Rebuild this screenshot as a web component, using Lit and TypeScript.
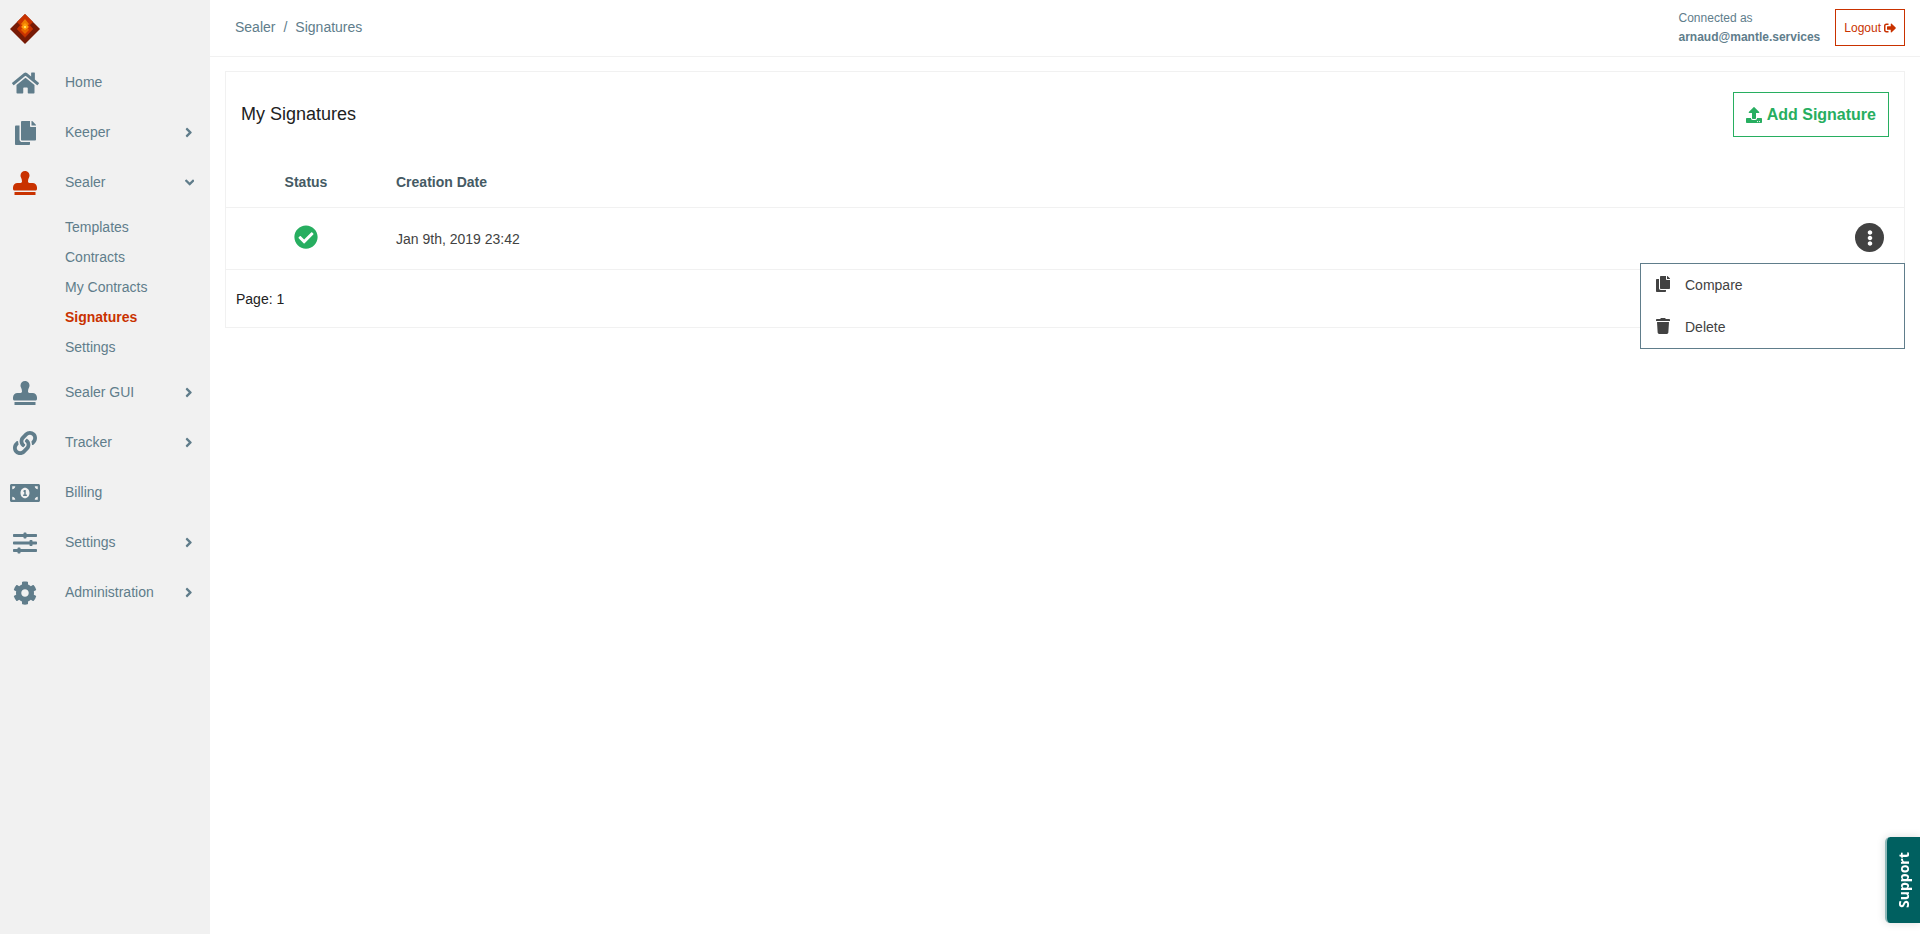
import { LitElement, html, css, nothing } from "lit";
import { customElement, property, state } from "lit/decorators.js";
import { classMap } from "lit/directives/class-map.js";

type Glyph = { w: number; d: string };

const GLYPHS: Record<string, Glyph> = {
  home: { w: 576, d: "M280.37 148.26L96 300.11V464a16 16 0 0 0 16 16l112.06-.29a16 16 0 0 0 15.92-16V368a16 16 0 0 1 16-16h64a16 16 0 0 1 16 16v95.64a16 16 0 0 0 16 16.05L464 480a16 16 0 0 0 16-16V300L295.67 148.26a12.19 12.19 0 0 0-15.3 0zM571.6 251.47L488 182.56V44.05a12 12 0 0 0-12-12h-56a12 12 0 0 0-12 12v72.61L318.47 43a48 48 0 0 0-61 0L4.34 251.47a12 12 0 0 0-1.6 16.9l25.5 31A12 12 0 0 0 45.15 301l235.22-193.74a12.19 12.19 0 0 1 15.3 0L530.9 301a12 12 0 0 0 16.9-1.6l25.5-31a12 12 0 0 0-1.7-16.93z" },
  copy: { w: 448, d: "M320 448v40c0 13.255-10.745 24-24 24H24c-13.255 0-24-10.745-24-24V120c0-13.255 10.745-24 24-24h72v296c0 30.879 25.121 56 56 56h168zm0-344V0H152c-13.255 0-24 10.745-24 24v368c0 13.255 10.745 24 24 24h272c13.255 0 24-10.745 24-24V128H344c-13.2 0-24-10.8-24-24zm120.971-31.029L375.029 7.029A24 24 0 0 0 358.059 0H352v96h96v-6.059a24 24 0 0 0-7.029-16.97z" },
  stamp: { w: 512, d: "M32 512h448v-64H32v64zm384-256h-66.56c-16.26 0-29.44-13.18-29.44-29.44v-9.46c0-27.37 8.88-53.41 21.46-77.72 9.11-17.61 12.9-38.39 9.05-60.42-6.77-38.78-38.47-70.7-77.26-77.45C212.62-9.04 160 37.33 160 96c0 14.16 3.12 27.54 8.69 39.58C182.02 164.43 192 194.7 192 226.49v.07c0 16.26-13.18 29.44-29.44 29.44H96c-53.02 0-96 42.98-96 96v32c0 17.67 14.33 32 32 32h448c17.67 0 32-14.33 32-32v-32c0-53.02-42.98-96-96-96z" },
  link: { w: 512, d: "M326.612 185.391c59.747 59.809 58.927 155.698.36 214.59-.11.12-.24.25-.36.37l-67.2 67.2c-59.27 59.27-155.699 59.262-214.96 0-59.27-59.26-59.27-155.7 0-214.96l37.106-37.106c9.84-9.84 26.786-3.3 27.294 10.606.648 17.722 3.826 35.527 9.69 52.721 1.986 5.822.567 12.262-3.783 16.612l-13.087 13.087c-28.026 28.026-28.905 73.66-1.155 101.96 28.024 28.579 74.086 28.749 102.325.51l67.2-67.19c28.191-28.191 28.073-73.757 0-101.83-3.701-3.694-7.429-6.564-10.341-8.569a16.037 16.037 0 0 1-6.947-12.606c-.396-10.567 3.348-21.456 11.698-29.806l21.054-21.055c5.521-5.521 14.182-6.199 20.584-1.731a152.482 152.482 0 0 1 20.522 17.197zM467.547 44.449c-59.261-59.262-155.69-59.27-214.96 0l-67.2 67.2c-.12.12-.25.25-.36.37-58.566 58.892-59.387 154.781.36 214.59a152.454 152.454 0 0 0 20.521 17.196c6.402 4.468 15.064 3.789 20.584-1.731l21.054-21.055c8.35-8.35 12.094-19.239 11.698-29.806a16.037 16.037 0 0 0-6.947-12.606c-2.912-2.005-6.64-4.875-10.341-8.569-28.073-28.073-28.191-73.639 0-101.83l67.2-67.19c28.239-28.239 74.3-28.069 102.325.51 27.75 28.3 26.872 73.934-1.155 101.96l-13.087 13.087c-4.35 4.35-5.769 10.79-3.783 16.612 5.864 17.194 9.042 34.999 9.69 52.721.509 13.906 17.454 20.446 27.294 10.606l37.106-37.106c59.271-59.259 59.271-155.699.001-214.959z" },
  bill: { w: 640, d: "M352 288h-16v-88c0-4.42-3.58-8-8-8h-13.58c-4.74 0-9.37 1.4-13.31 4.03l-15.33 10.22a7.994 7.994 0 0 0-2.22 11.09l8.88 13.31a7.994 7.994 0 0 0 11.09 2.22l.47-.31V288h-16c-4.42 0-8 3.58-8 8v16c0 4.42 3.58 8 8 8h64c4.42 0 8-3.58 8-8v-16c0-4.42-3.58-8-8-8zM608 64H32C14.33 64 0 78.33 0 96v320c0 17.67 14.33 32 32 32h576c17.67 0 32-14.33 32-32V96c0-17.67-14.33-32-32-32zM48 400v-64c35.35 0 64 28.65 64 64H48zm0-224v-64h64c0 35.35-28.65 64-64 64zm272 192c-53.02 0-96-50.15-96-112 0-61.86 42.98-112 96-112s96 50.14 96 112c0 61.87-43 112-96 112zm272 32h-64c0-35.35 28.65-64 64-64v64zm0-224c-35.35 0-64-28.65-64-64h64v64z" },
  sliders: { w: 512, d: "M496 384H160v-16c0-8.8-7.2-16-16-16h-32c-8.8 0-16 7.2-16 16v16H16c-8.8 0-16 7.2-16 16v32c0 8.8 7.2 16 16 16h80v16c0 8.8 7.2 16 16 16h32c8.8 0 16-7.2 16-16v-16h336c8.8 0 16-7.2 16-16v-32c0-8.8-7.2-16-16-16zm0-160h-80v-16c0-8.8-7.2-16-16-16h-32c-8.8 0-16 7.2-16 16v16H16c-8.8 0-16 7.2-16 16v32c0 8.8 7.2 16 16 16h336v16c0 8.8 7.2 16 16 16h32c8.8 0 16-7.2 16-16v-16h80c8.8 0 16-7.2 16-16v-32c0-8.8-7.2-16-16-16zm0-160H288V48c0-8.8-7.2-16-16-16h-32c-8.8 0-16 7.2-16 16v16H16C7.2 64 0 71.2 0 80v32c0 8.8 7.2 16 16 16h208v16c0 8.8 7.2 16 16 16h32c8.8 0 16-7.2 16-16v-16h208c8.8 0 16-7.2 16-16V80c0-8.8-7.2-16-16-16z" },
  cog: { w: 512, d: "M487.4 315.7l-42.6-24.6c4.3-23.2 4.3-47 0-70.2l42.6-24.6c4.9-2.8 7.1-8.6 5.5-14-11.1-35.6-30-67.8-54.7-94.6-3.8-4.1-10-5.1-14.8-2.3L380.8 110c-17.9-15.4-38.5-27.3-60.8-35.1V25.8c0-5.6-3.9-10.5-9.4-11.7-36.7-8.2-74.3-7.8-109.2 0-5.5 1.2-9.4 6.1-9.4 11.7V75c-22.2 7.9-42.8 19.8-60.8 35.1L88.7 85.5c-4.9-2.8-11-1.9-14.8 2.3-24.7 26.7-43.6 58.9-54.7 94.6-1.7 5.4.6 11.2 5.5 14L67.3 221c-4.3 23.2-4.3 47 0 70.2l-42.6 24.6c-4.9 2.8-7.1 8.6-5.5 14 11.1 35.6 30 67.8 54.7 94.6 3.8 4.1 10 5.1 14.8 2.3l42.6-24.6c17.9 15.4 38.5 27.3 60.8 35.1v49.2c0 5.6 3.9 10.5 9.4 11.7 36.7 8.2 74.3 7.8 109.2 0 5.5-1.2 9.4-6.1 9.4-11.7v-49.2c22.2-7.9 42.8-19.8 60.8-35.1l42.6 24.6c4.9 2.8 11 1.9 14.8-2.3 24.7-26.7 43.6-58.9 54.7-94.6 1.5-5.5-.7-11.3-5.6-14.1zM256 336c-44.1 0-80-35.9-80-80s35.9-80 80-80 80 35.9 80 80-35.9 80-80 80z" },
  upload: { w: 512, d: "M296 384h-80c-13.3 0-24-10.7-24-24V192h-87.7c-17.8 0-26.7-21.5-14.1-34.1L242.3 5.7c7.5-7.5 19.8-7.5 27.3 0l152.2 152.2c12.6 12.6 3.7 34.1-14.1 34.1H320v168c0 13.3-10.7 24-24 24zm216-8v112c0 13.3-10.7 24-24 24H24c-13.3 0-24-10.7-24-24V376c0-13.3 10.7-24 24-24h136v8c0 30.9 25.1 56 56 56h80c30.9 0 56-25.1 56-56v-8h136c13.3 0 24 10.7 24 24zm-124 88c0-11-9-20-20-20s-20 9-20 20 9 20 20 20 20-9 20-20zm64 0c0-11-9-20-20-20s-20 9-20 20 9 20 20 20 20-9 20-20z" },
  logout: { w: 512, d: "M497 273L329 441c-15 15-41 4.5-41-17v-96H152c-13.3 0-24-10.7-24-24v-96c0-13.3 10.7-24 24-24h136V88c0-21.4 25.9-32 41-17l168 168c9.3 9.4 9.3 24.6 0 34zM192 436v-40c0-6.6-5.4-12-12-12H96c-17.7 0-32-14.3-32-32V160c0-17.7 14.3-32 32-32h84c6.6 0 12-5.4 12-12V76c0-6.6-5.4-12-12-12H96c-53 0-96 43-96 96v192c0 53 43 96 96 96h84c6.6 0 12-5.4 12-12z" },
  trash: { w: 448, d: "M0 84V56c0-13.3 10.7-24 24-24h112l9.4-18.7c4-8.2 12.3-13.3 21.4-13.3h114.3c9.1 0 17.4 5.1 21.5 13.3L312 32h112c13.3 0 24 10.7 24 24v28c0 6.6-5.4 12-12 12H12C5.4 96 0 90.6 0 84zm415.2 56.7L394.8 467c-1.6 25.3-22.6 45-47.9 45H101.1c-25.3 0-46.3-19.7-47.9-45L32.8 140.7c-.4-6.9 5.1-12.7 12-12.7h358.5c6.8 0 12.3 5.8 11.9 12.7z" },
  check: { w: 512, d: "M504 256c0 136.967-111.033 248-248 248S8 392.967 8 256 119.033 8 256 8s248 111.033 248 248zM227.314 387.314l184-184c6.248-6.248 6.248-16.379 0-22.627l-22.627-22.627c-6.248-6.249-16.379-6.249-22.628 0L216 308.118l-70.059-70.059c-6.248-6.248-16.379-6.248-22.628 0l-22.627 22.627c-6.248 6.248-6.248 16.379 0 22.627l104 104c6.249 6.249 16.379 6.249 22.628.001z" },
  dots: { w: 192, d: "M96 184c39.8 0 72 32.2 72 72s-32.2 72-72 72-72-32.2-72-72 32.2-72 72-72zM24 80c0 39.8 32.2 72 72 72s72-32.2 72-72S135.8 8 96 8 24 40.2 24 80zm0 352c0 39.8 32.2 72 72 72s72-32.2 72-72-32.2-72-72-72-72 32.2-72 72z" },
  right: { w: 256, d: "M224.3 273l-136 136c-9.4 9.4-24.6 9.4-33.9 0l-22.6-22.6c-9.4-9.4-9.4-24.6 0-33.9l96.4-96.4-96.4-96.4c-9.4-9.4-9.4-24.6 0-33.9L54.3 103c9.4-9.4 24.6-9.4 33.9 0l136 136c9.5 9.4 9.5 24.6.1 34z" },
  down: { w: 320, d: "M143 352.3L7 216.3c-9.4-9.4-9.4-24.6 0-33.9l22.6-22.6c9.4-9.4 24.6-9.4 33.9 0l96.4 96.4 96.4-96.4c9.4-9.4 24.6-9.4 33.9 0l22.6 22.6c9.4 9.4 9.4 24.6 0 33.9l-136 136c-9.2 9.4-24.4 9.4-33.8 0z" },
};

@customElement("ui-icon")
class UiIcon extends LitElement {
  static styles = css`
    :host { display: inline-flex; flex: none; }
    .glyph { display: block; height: 1em; width: auto; fill: currentColor; }
  `;

  @property() name = "";

  render() {
    const g = GLYPHS[this.name];
    return html`<svg class="glyph" viewBox="0 0 ${g.w} 512" aria-hidden="true"><path d=${g.d}></path></svg>`;
  }
}

interface NavItem {
  label: string;
  icon: string;
  expandable?: boolean;
  children?: string[];
}

const NAV: NavItem[] = [
  { label: "Home", icon: "home" },
  { label: "Keeper", icon: "copy", expandable: true },
  {
    label: "Sealer",
    icon: "stamp",
    expandable: true,
    children: ["Templates", "Contracts", "My Contracts", "Signatures", "Settings"],
  },
  { label: "Sealer GUI", icon: "stamp", expandable: true },
  { label: "Tracker", icon: "link", expandable: true },
  { label: "Billing", icon: "bill" },
  { label: "Settings", icon: "sliders", expandable: true },
  { label: "Administration", icon: "cog", expandable: true },
];

@customElement("side-nav")
class SideNav extends LitElement {
  static styles = css`
    :host { display: block; background: #f1f1f1; color: #607d8b; }
    .brand { display: flex; align-items: center; height: 57px; padding-left: 10px; box-sizing: border-box; }
    .logo { display: block; width: 30px; height: 30px; }
    .list { list-style: none; margin: 0; padding: 0; }
    .item {
      display: grid; grid-template-columns: 50px 1fr auto; align-items: center;
      width: 100%; height: 50px; padding: 0; border: 0; background: none; box-sizing: border-box;
      font: inherit; color: inherit; text-align: left; text-decoration: none; cursor: pointer;
    }
    .icon { display: flex; justify-content: center; padding-top: 2px; font-size: 24px; }
    .active .icon { color: #c93200; }
    .label { padding-left: 15px; }
    .arrow { width: 25px; display: flex; font-size: 15px; }
    .sub { list-style: none; margin: 0; padding: 5px 0; }
    .sublink {
      display: flex; align-items: center; height: 30px; padding-left: 65px;
      color: inherit; text-decoration: none;
    }
    .current { color: #c93200; font-weight: bold; }
  `;

  @state() private open = "Sealer";

  private toggle(label: string) {
    this.open = this.open === label ? "" : label;
  }

  render() {
    return html`
      <div class="brand">
        <svg class="logo" viewBox="0 0 30 30" role="img" aria-label="Mantle">
          <path fill="#771a05" d="M15 0L30 15 15 30 0 15z"></path>
          <path fill="#c93200" d="M15 0l8 8-8 8-8-8z"></path>
          <path fill="#a52904" d="M7 15l3-4 10 0 3 4-8 9z"></path>
          <path fill="#c93200" d="M15 6l8 9-8 8-8-8z"></path>
          <path fill="#ee7c00" d="M15 5l4 5-4 4-4-4z"></path>
          <path fill="#e66500" d="M15 10l4 6-4 4-4-4z"></path>
          <path fill="#ff9d0a" d="M15 9l4 4-4 3-4-3z"></path>
          <path fill="#ffe060" d="M14 12h2v2h-2z"></path>
        </svg>
      </div>
      <nav aria-label="Main">
        <ul class="list">
          ${NAV.map((n) => {
            const isOpen = !!n.children && this.open === n.label;
            const inner = html`
              <span class="icon"><ui-icon name=${n.icon}></ui-icon></span>
              <span class="label">${n.label}</span>
              ${n.expandable
                ? html`<span class="arrow"><ui-icon name=${isOpen ? "down" : "right"}></ui-icon></span>`
                : nothing}
            `;
            return html`<li>
              ${n.expandable
                ? html`<button
                    type="button"
                    class=${classMap({ item: true, active: !!n.children })}
                    aria-expanded=${isOpen ? "true" : "false"}
                    @click=${() => this.toggle(n.label)}
                  >${inner}</button>`
                : html`<a class="item" href="#">${inner}</a>`}
              ${isOpen
                ? html`<ul class="sub">
                    ${n.children!.map(
                      (c) => html`<li>
                        <a class=${classMap({ sublink: true, current: c === "Signatures" })} href="#">${c}</a>
                      </li>`
                    )}
                  </ul>`
                : nothing}
            </li>`;
          })}
        </ul>
      </nav>
    `;
  }
}

@customElement("signature-card")
class SignatureCard extends LitElement {
  static styles = css`
    :host { display: block; border: 1px solid #f1f1f1; }
    .head { display: flex; align-items: center; justify-content: space-between; padding: 20px 15px; }
    .title { margin: 0; font-size: 18px; font-weight: normal; color: #212121; }
    .add {
      display: flex; align-items: center; gap: 5px; height: 45px; padding: 0 12px;
      border: 1px solid #27ae60; background: #fff; color: #27ae60;
      font: bold 16px "Liberation Sans", Arial, sans-serif; cursor: pointer;
    }
    .table { width: 100%; border-spacing: 0; color: #424242; }
    .table th, .table td { box-sizing: border-box; padding: 0 10px; border-bottom: 1px solid #f1f1f1; }
    .table th { height: 51px; color: #455a64; text-align: left; }
    .table td { height: 62px; }
    .table .status { width: 160px; text-align: center; }
    .table .actions { position: relative; width: 70px; padding: 0 20px 2px 0; }
    .ok { color: #27ae60; font-size: 24px; vertical-align: middle; padding-bottom: 3px; }
    .more {
      display: flex; align-items: center; justify-content: center; width: 29px; height: 29px;
      margin-left: auto; padding: 0; border: 0; border-radius: 50%;
      background: #424242; color: #fff; font-size: 16px; cursor: pointer;
    }
    .menu {
      position: absolute; z-index: 1; top: 55px; right: -1px; width: 265px; box-sizing: border-box;
      border: 1px solid #607d8b; background: #fff;
    }
    .option {
      display: flex; align-items: center; gap: 15px; width: 100%; height: 42px; padding: 0 15px;
      border: 0; background: none; color: #424242; font: inherit; cursor: pointer;
    }
    .option ui-icon { font-size: 16px; padding-bottom: 2px; }
    .foot { display: flex; align-items: center; height: 57px; padding: 0 10px; color: #212121; }
  `;

  @state() private menuOpen = true;

  render() {
    return html`
      <div class="head">
        <h1 class="title">My Signatures</h1>
        <button type="button" class="add"><ui-icon name="upload"></ui-icon>Add Signature</button>
      </div>
      <table class="table">
        <thead>
          <tr>
            <th class="status" scope="col">Status</th>
            <th scope="col">Creation Date</th>
            <th class="actions" scope="col"></th>
          </tr>
        </thead>
        <tbody>
          <tr>
            <td class="status"><ui-icon class="ok" name="check"></ui-icon></td>
            <td>Jan 9th, 2019 23:42</td>
            <td class="actions">
              <button
                type="button"
                class="more"
                aria-label="Actions"
                aria-expanded=${this.menuOpen ? "true" : "false"}
                @click=${() => (this.menuOpen = !this.menuOpen)}
              ><ui-icon name="dots"></ui-icon></button>
              ${this.menuOpen
                ? html`<div class="menu" role="menu">
                    <button type="button" role="menuitem" class="option"><ui-icon name="copy"></ui-icon>Compare</button>
                    <button type="button" role="menuitem" class="option"><ui-icon name="trash"></ui-icon>Delete</button>
                  </div>`
                : nothing}
            </td>
          </tr>
        </tbody>
      </table>
      <div class="foot">Page: 1</div>
    `;
  }
}

@customElement("app-root")
class AppRoot extends LitElement {
  static styles = css`
    :host {
      display: grid; grid-template-columns: 210px minmax(0, 1fr); min-height: 100vh;
      background: #fff; color: #607d8b; font: 14px "Liberation Sans", Arial, sans-serif;
    }
    .top {
      display: flex; align-items: center; justify-content: space-between;
      padding: 9px 15px 9px 25px; border-bottom: 1px solid #f1f1f1;
    }
    .crumbs { display: flex; gap: 8px; padding-bottom: 2px; }
    .crumb { color: inherit; text-decoration: none; }
    .account { display: flex; align-items: flex-start; gap: 15px; font-size: 12px; }
    .who { line-height: 19px; }
    .user { display: block; }
    .logout {
      display: flex; align-items: center; gap: 3px; height: 37px; padding: 0 8px;
      border: 1px solid #c93200; background: #fff; color: #c93200; font: inherit; cursor: pointer;
    }
    .content { padding: 14px 15px; }
    .support {
      position: fixed; right: 0; bottom: 11px; display: flex; align-items: center; justify-content: center;
      width: 35px; height: 86px; padding: 0; border: 0; border-right: 2px solid #8fb9b9;
      border-radius: 0 5px 5px 0; background: #006060; color: #fff;
      box-shadow: 0 0 8px rgba(0, 0, 0, 0.15);
      font: bold 14px "Open Sans", "Noto Sans", sans-serif;
      writing-mode: vertical-rl; transform: rotate(180deg); cursor: pointer;
    }
  `;

  render() {
    return html`
      <side-nav></side-nav>
      <div>
        <header class="top">
          <nav class="crumbs" aria-label="Breadcrumb">
            <a class="crumb" href="#">Sealer</a><span>/</span><a class="crumb" href="#">Signatures</a>
          </nav>
          <div class="account">
            <div class="who">Connected as <strong class="user">arnaud@mantle.services</strong></div>
            <button type="button" class="logout">Logout<ui-icon name="logout"></ui-icon></button>
          </div>
        </header>
        <main class="content"><signature-card></signature-card></main>
      </div>
      <button type="button" class="support">Support</button>
    `;
  }
}
